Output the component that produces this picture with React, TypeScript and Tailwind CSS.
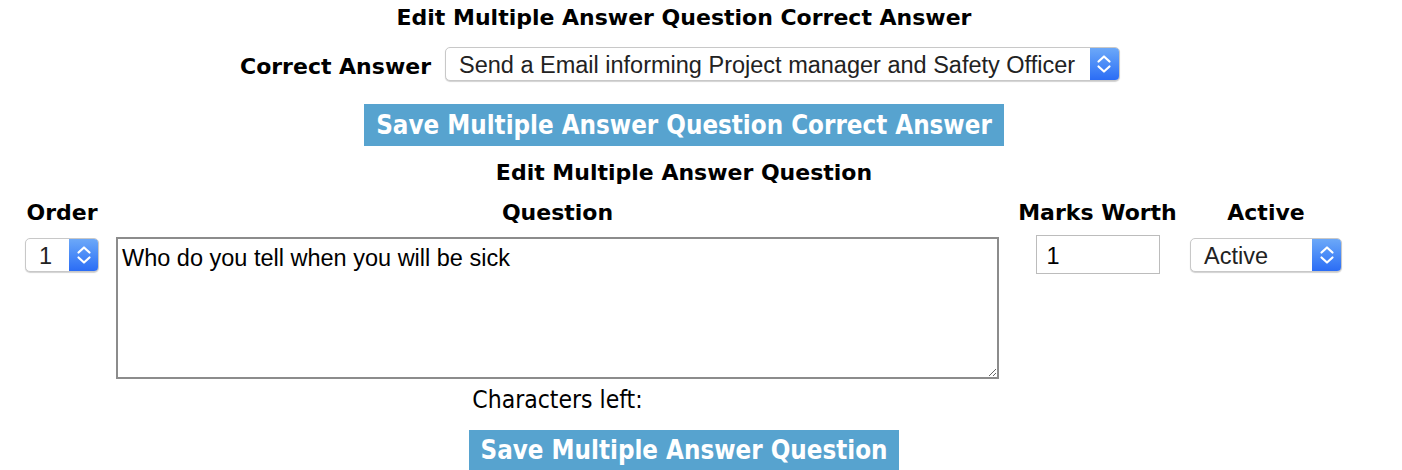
import React from "react";

const verdana = { fontFamily: '"DejaVu Sans", Verdana, sans-serif' };
const tahoma = { fontFamily: '"DejaVu Sans Condensed", "DejaVu Sans", sans-serif', fontStretch: "condensed" as const };
const helv = { fontFamily: '"Liberation Sans", Arial, sans-serif' };

function Chevrons() {
  return (
    <svg width="16" height="22" viewBox="0 0 16 22" fill="none">
      <path d="M2.5 8.5 L8 3.5 L13.5 8.5" stroke="white" strokeWidth="2.2" strokeLinecap="round" strokeLinejoin="round" />
      <path d="M2.5 13.5 L8 18.5 L13.5 13.5" stroke="white" strokeWidth="2.2" strokeLinecap="round" strokeLinejoin="round" />
    </svg>
  );
}

function MacSelect({ value, className }: { value: string; className: string }) {
  return (
    <div
      className={`flex items-stretch rounded-[5px] border border-[#c8c8c8] bg-white shadow-[0_1px_1px_rgba(0,0,0,0.18)] overflow-hidden ${className}`}
      style={helv}
    >
      <div className="flex-1 flex items-center pl-[13px] pt-[2px] text-[23.5px] leading-[28px] text-[#222] whitespace-nowrap">{value}</div>
      <div className="w-[29px] flex items-center justify-center bg-gradient-to-b from-[#6ca8f8] to-[#2b6cf5]">
        <Chevrons />
      </div>
    </div>
  );
}

export default function App() {
  return (
    <div className="w-[1368px] bg-white text-black flex flex-col items-center" style={verdana}>
      <div className="mt-[6px] text-[22px] font-bold leading-[24px]">Edit Multiple Answer Question Correct Answer</div>
      <div className="mt-[17px] h-[34px] flex items-center gap-[14px] ml-[-8px]">
        <div className="text-[22px] font-bold leading-[24px] pt-[6px]">Correct Answer</div>
        <MacSelect value="Send a Email informing Project manager and Safety Officer" className="w-[675px] h-[34px]" />
      </div>
      <button
        className="mt-[23px] h-[42px] px-[12px] pt-[2px] bg-[#57a3cf] text-white text-[25.7px] font-bold leading-none"
        style={tahoma}
      >
        Save Multiple Answer Question Correct Answer
      </button>
      <div className="mt-[15px] text-[22px] font-bold leading-[24px]">Edit Multiple Answer Question</div>

      <div className="w-full mt-[16px] flex items-start">
        <div className="ml-[25px] w-[74px] flex flex-col items-center">
          <div className="text-[22px] font-bold leading-[24px]">Order</div>
          <MacSelect value="1" className="mt-[13px] w-[74px] h-[34px]" />
        </div>
        <div className="ml-[17px] w-[883px] flex flex-col items-center">
          <div className="text-[22px] font-bold leading-[24px]">Question</div>
          <textarea
            className="mt-[12px] w-[883px] h-[142px] border-2 border-[#8c8c8c] px-[4px] pt-[6px] pb-[4px] text-[23.5px] leading-[26px] text-black outline-none resize"
            style={helv}
            defaultValue="Who do you tell when you will be sick"
          />
          <div className="mt-[9px] text-[24.5px] leading-[24px]" style={tahoma}>
            Characters left:
          </div>
        </div>
        <div className="ml-[13px] w-[171px] flex flex-col items-center">
          <div className="text-[22px] font-bold leading-[24px]">Marks Worth</div>
          <input
            className="mt-[10px] w-[124px] h-[39px] border border-[#bcbcbc] px-[10px] pt-[4px] text-[23.5px] outline-none"
            style={helv}
            defaultValue="1"
          />
        </div>
        <div className="ml-[7px] w-[152px] flex flex-col items-center">
          <div className="text-[22px] font-bold leading-[24px]">Active</div>
          <MacSelect value="Active" className="mt-[13px] w-[152px] h-[34px]" />
        </div>
      </div>

      <button
        className="mt-[18px] h-[40px] px-[12px] pt-[2px] bg-[#57a3cf] text-white text-[25.7px] font-bold leading-none"
        style={tahoma}
      >
        Save Multiple Answer Question
      </button>
    </div>
  );
}
